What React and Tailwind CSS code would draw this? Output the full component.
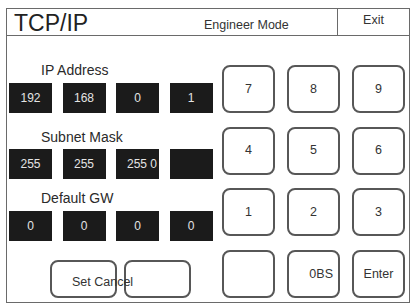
import React from "react";

const font = { fontFamily: '"Liberation Sans", Arial, sans-serif' };

function Field({ value, right }) {
  return (
    <div
      className={
        "w-[43px] h-[30px] bg-[#1b1b1b] text-[#e4e4e4] text-[12px] leading-none flex items-center overflow-hidden " +
        (right ? "justify-end pr-[2px]" : "justify-center")
      }
    >
      {value}
    </div>
  );
}

function Label({ children, className }) {
  return (
    <div className={"ml-[32px] h-[16px] text-[14px] leading-[16px] text-[#2a2a2a] whitespace-nowrap " + className}>
      {children}
    </div>
  );
}

function Key({ children, align }) {
  return (
    <div
      className={
        "w-[53px] h-[48px] border-2 border-[#575757] rounded-[8px] bg-white text-[12.5px] leading-none text-[#333] flex items-center " +
        (align === "right" ? "justify-end pr-[5px]" : "justify-center")
      }
    >
      {children}
    </div>
  );
}

export default function App() {
  return (
    <div className="w-[412px] h-[306px] bg-white pt-[8px] pl-[6px]" style={font}>
      <div className="w-[404px] h-[295px] border border-[#6a6a6a] flex flex-col">
        {/* header */}
        <div className="h-[27px] border-b border-[#6a6a6a] flex shrink-0">
          <div className="w-[197px] pl-[7px] pt-[3px] text-[23px] leading-none text-[#222]">TCP/IP</div>
          <div className="flex-1 pt-[10px] text-[12.5px] leading-none text-[#333] whitespace-nowrap">Engineer Mode</div>
          <div className="w-[72px] border-l border-[#6a6a6a] flex justify-center pt-[5px] text-[12.5px] leading-none text-[#333]">
            Exit
          </div>
        </div>
        {/* body */}
        <div className="flex flex-1">
          <div className="w-[215px] pl-[2px] flex flex-col">
            <Label className="mt-[26px]">IP Address</Label>
            <div className="mt-[5px] flex gap-[10.5px]">
              <Field value="192" />
              <Field value="168" />
              <Field value="0" />
              <Field value="1" />
            </div>
            <Label className="mt-[16px]">Subnet Mask</Label>
            <div className="mt-[4px] flex gap-[10.5px]">
              <Field value="255" />
              <Field value="255" />
              <Field value="255 0" right />
              <Field value="" />
            </div>
            <Label className="mt-[11px]">Default GW</Label>
            <div className="mt-[5px] flex gap-[10.5px]">
              <Field value="0" />
              <Field value="0" />
              <Field value="0" />
              <Field value="0" />
            </div>
            <div className="mt-[19px] ml-[41px] flex gap-[7px]">
              <div className="relative w-[67px] h-[38px] border-2 border-[#575757] rounded-[8px] pl-[20px] pt-[14px] text-[12.5px] leading-none text-[#333] whitespace-nowrap">
                <span className="relative z-10">Set Cancel</span>
              </div>
              <div className="w-[67px] h-[38px] border-2 border-[#575757] rounded-[8px] bg-transparent"></div>
            </div>
          </div>
          <div className="pt-[29px] grid grid-cols-[53px_53px_53px] gap-x-[12px] gap-y-[13.7px] content-start">
            <Key>7</Key>
            <Key>8</Key>
            <Key>9</Key>
            <Key>4</Key>
            <Key>5</Key>
            <Key>6</Key>
            <Key>1</Key>
            <Key>2</Key>
            <Key>3</Key>
            <Key></Key>
            <Key align="right">0BS</Key>
            <Key>Enter</Key>
          </div>
        </div>
      </div>
    </div>
  );
}
